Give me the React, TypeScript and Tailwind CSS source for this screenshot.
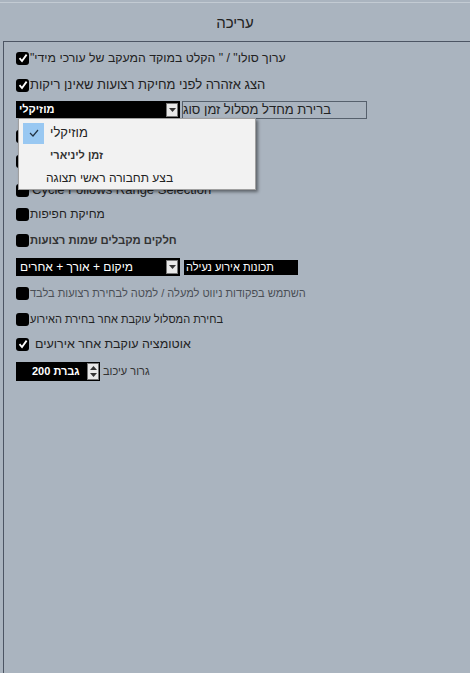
import React from "react";

const Check = ({ on }: { on?: boolean }) => (
  <span className="w-[13px] h-[13px] bg-black rounded-[3px] flex items-center justify-center shrink-0">
    {on && (
      <svg width="10" height="10" viewBox="0 0 10 10">
        <path d="M1.5 5.2 L4 8 L8.6 1.6" stroke="white" strokeWidth="1.8" fill="none" />
      </svg>
    )}
  </span>
);

const Arrow = () => (
  <span className="w-[12px] h-[14px] bg-[#e8e8e8] border border-[#777] flex items-center justify-center">
    <svg width="7" height="4" viewBox="0 0 7 4">
      <path d="M0 0 H7 L3.5 4 Z" fill="#333" />
    </svg>
  </span>
);

const Row = ({ on, text, cls, mt, gap }: { on?: boolean; text: string; cls: string; mt: string; gap?: string }) => (
  <div className={`h-[18px] flex items-center ${mt}`}>
    <Check on={on} />
    <span dir="rtl" className={`${gap ?? "ml-[1px]"} whitespace-nowrap ${cls}`}>
      {text}
    </span>
  </div>
);

export default function App() {
  return (
    <div
      className="w-[470px] h-[673px] bg-[#aab4bf] relative flex flex-col overflow-hidden"
      style={{ fontFamily: '"Liberation Sans", "DejaVu Sans", sans-serif' }}
    >
      <div className="h-[2px] shrink-0" />
      <div className="h-[1px] bg-[#c3cbd3] shrink-0" />
      <div className="h-[38px] shrink-0 flex items-center justify-center">
        <span dir="rtl" className="text-[15px] text-[#222] mt-[2px]">עריכה</span>
      </div>
      <div className="flex-1 ml-[3px] border-l border-t border-[#4c5563] pl-[12px] pt-[7px] flex flex-col">
        <Row on text={'ערוך סולו" / " הקלט במוקד המעקב של עורכי מידי"'} cls="text-[12.3px] text-[#222]" mt="" />
        <Row on text="הצג אזהרה לפני מחיקת רצועות שאינן ריקות" cls="text-[13px] text-[#222]" mt="mt-[9px]" />
        <div className="h-[17px] flex items-center mt-[7px]">
          <div className="w-[164px] h-[17px] bg-black flex items-center justify-between pl-[3px] pr-[2px]">
            <span dir="rtl" className="text-[11px] font-bold text-white">מוזיקלי</span>
            <Arrow />
          </div>
          <div className="ml-[2px] w-[185px] h-[18px] border border-[#56606c] flex items-center overflow-hidden">
            <span dir="rtl" className="text-[13px] text-[#222] whitespace-nowrap">ברירת מחדל מסלול זמן סוג</span>
          </div>
        </div>
        <Row text="" cls="" mt="mt-[9px]" />
        <Row text="" cls="" mt="mt-[7px]" />
        <Row text="Cycle Follows Range Selection" cls="text-[13px] text-[#222]" mt="mt-[11px]" gap="ml-[3px]" />
        <Row text="מחיקת חפיפות" cls="text-[12px] text-[#222]" mt="mt-[6px]" />
        <Row text="חלקים מקבלים שמות רצועות" cls="text-[11.3px] font-bold text-[#333]" mt="mt-[8px]" />
        <div className="h-[18px] flex items-center mt-[9px]">
          <div className="w-[164px] h-[18px] bg-black flex items-center justify-between pl-[4px] pr-[2px]">
            <span dir="rtl" className="text-[12px] text-white whitespace-nowrap">מיקום + אורך + אחרים</span>
            <Arrow />
          </div>
          <div className="ml-[4px] w-[114px] h-[15px] bg-black flex items-center pl-[2px]">
            <span dir="rtl" className="text-[11px] text-white whitespace-nowrap">תכונות אירוע נעילה</span>
          </div>
        </div>
        <Row text="השתמש בפקודות ניווט למעלה / למטה לבחירת רצועות בלבד" cls="text-[11px] text-[#4a4f56]" mt="mt-[8px]" />
        <Row text="בחירת המסלול עוקבת אחר בחירת האירוע" cls="text-[11px] text-[#222]" mt="mt-[8px]" />
        <Row on text="אוטומציה עוקבת אחר אירועים" cls="text-[12.5px] text-[#222]" mt="mt-[7px]" gap="ml-[6px]" />
        <div className="h-[19px] flex items-center mt-[9px]">
          <div className="w-[84px] h-[19px] bg-black flex items-center justify-between pr-[1px]">
            <span dir="rtl" className="text-[11px] font-bold text-white ml-[16px] whitespace-nowrap">גברת 200</span>
            <span className="w-[12px] h-[17px] bg-[#e8e8e8] border border-[#777] flex flex-col items-center justify-around">
              <svg width="7" height="4" viewBox="0 0 7 4"><path d="M0 4 H7 L3.5 0 Z" fill="#333" /></svg>
              <svg width="7" height="4" viewBox="0 0 7 4"><path d="M0 0 H7 L3.5 4 Z" fill="#333" /></svg>
            </span>
          </div>
          <span dir="rtl" className="ml-[3px] text-[11px] text-[#333]">גרור עיכוב</span>
        </div>
      </div>

      <div className="absolute left-[18px] top-[118px] w-[238px] h-[72px] bg-[#f2f2f2] border border-[#a0a0a0] shadow-[2px_2px_3px_rgba(0,0,0,0.45)] flex flex-col pl-[4px] pt-[3px]">
        <div className="h-[22px] flex items-center">
          <span className="w-[21px] h-[21px] bg-[#99c8f2] flex items-center justify-center">
            <svg width="10" height="8" viewBox="0 0 10 8">
              <path d="M1 4 L4 7 L9 1" stroke="#234" strokeWidth="1.2" fill="none" />
            </svg>
          </span>
          <span dir="rtl" className="ml-[6px] text-[13px] text-[#222]">מוזיקלי</span>
        </div>
        <div className="h-[23px] flex items-center">
          <span dir="rtl" className="ml-[27px] text-[11px] font-bold text-[#333]">זמן ליניארי</span>
        </div>
        <div className="h-[22px] flex items-center">
          <span dir="rtl" className="ml-[23px] text-[12px] text-[#222]">בצע תחבורה ראשי תצוגה</span>
        </div>
      </div>
    </div>
  );
}
